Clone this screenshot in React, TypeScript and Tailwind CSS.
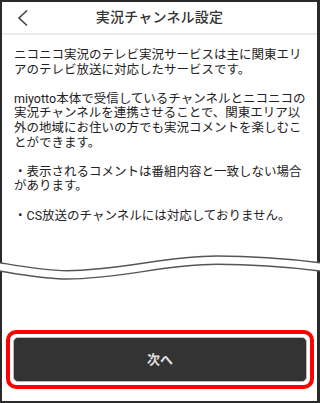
import React from "react";

export default function App() {
  const lines1 = ["ニコニコ実況のテレビ実況サービスは主に関東エリ", "アのテレビ放送に対応したサービスです。"];
  const lines2 = [
    "miyotto本体で受信しているチャンネルとニコニコの",
    "実況チャンネルを連携させることで、関東エリア以",
    "外の地域にお住いの方でも実況コメントを楽しむこ",
    "とができます。",
  ];
  const lines3 = ["・表示されるコメントは番組内容と一致しない場合", "があります。"];
  const lines4 = ["・CS放送のチャンネルには対応しておりません。"];
  const para = (ls: string[]) => (
    <div>
      {ls.map((l, i) => (
        <div key={i} className="whitespace-nowrap">
          {l}
        </div>
      ))}
    </div>
  );
  return (
    <div className="w-[320px] h-[403px] bg-white flex flex-col font-['Roboto','Noto_Sans_CJK_JP',sans-serif]">
      <div className="h-[254px] border-t-2 border-l-2 border-r-[3px] border-[#2a2a2a] flex flex-col">
        <div className="h-[31px] relative flex items-center justify-center">
          <svg className="absolute left-[14px] top-[7px]" width="14" height="18" viewBox="0 0 14 18">
            <polyline points="11,1.5 3,9 11,16.5" fill="none" stroke="#444" strokeWidth="1.6" />
          </svg>
          <span className="text-[14px] font-medium text-[#333] tracking-[0.2px]">実況チャンネル設定</span>
        </div>
        <div className="h-[2px] bg-[#ececec]" />
        <div className="pl-[12px] pt-[13px] text-[12.5px] leading-[14.6px] text-[#222] flex flex-col gap-[14.6px]">
          {para(lines1)}
          {para(lines2)}
          {para(lines3)}
          {para(lines4)}
        </div>
      </div>
      <svg width="320" height="27" viewBox="0 0 320 27" className="block">
        <line x1="1" y1="0" x2="1" y2="9" stroke="#2a2a2a" strokeWidth="2" />
        <line x1="1" y1="17" x2="1" y2="27" stroke="#2a2a2a" strokeWidth="2" />
        <line x1="318.5" y1="0" x2="318.5" y2="9" stroke="#2a2a2a" strokeWidth="3" />
        <line x1="318.5" y1="17" x2="318.5" y2="27" stroke="#2a2a2a" strokeWidth="3" />
        <path d="M0 8.7 C22 12.5 44 16.7 67 16.7 C120 16.7 165 2 217 2 C260 2 290 5 320 8.7" fill="none" stroke="#555" strokeWidth="1.4" />
        <path d="M0 17 C22 20.8 44 25 67 25 C120 25 165 10.3 217 10.3 C260 10.3 290 13.3 320 17" fill="none" stroke="#555" strokeWidth="1.4" />
      </svg>
      <div className="flex-1 border-b-2 border-l-2 border-r-[3px] border-[#2a2a2a] pt-[49px] pl-[4px] pr-[3px]">
        <div className="h-[59px] border-[4px] border-[#ff0000] rounded-[10px] p-[3px]">
          <div className="h-full bg-[#333] border border-[#bbb] rounded-[5px] flex items-center justify-center">
            <span className="text-[13px] font-bold text-[#e0e0e0]">次へ</span>
          </div>
        </div>
      </div>
    </div>
  );
}
